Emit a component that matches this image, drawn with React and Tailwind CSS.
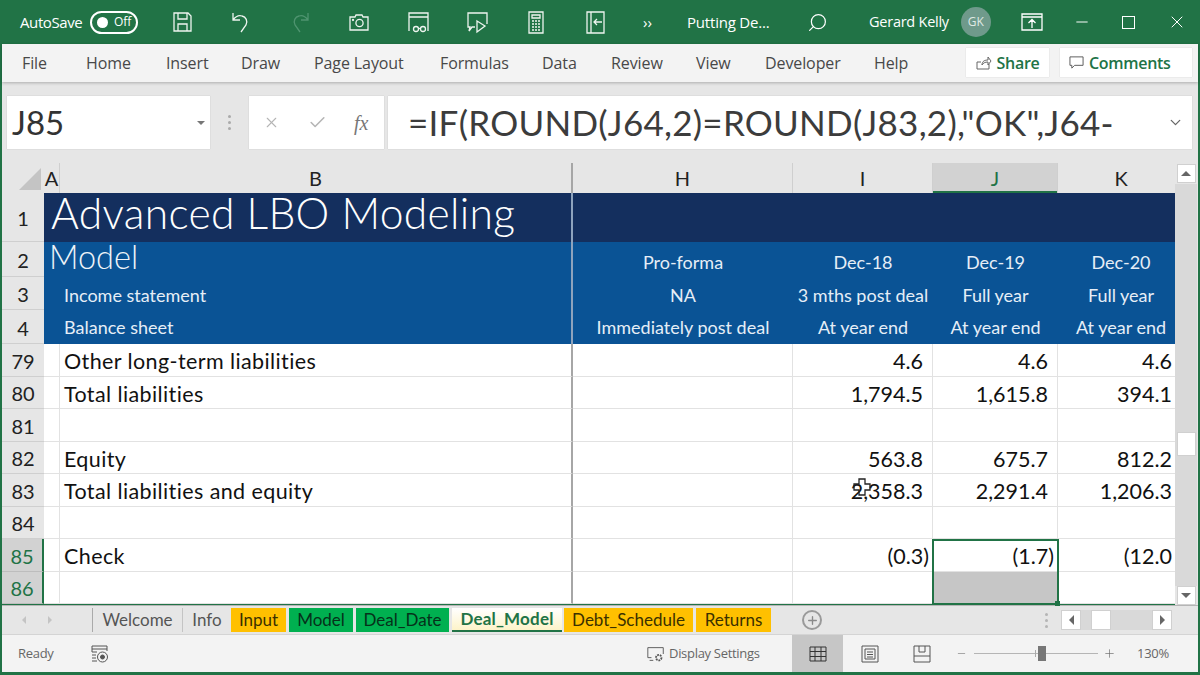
import React from "react"
import { ChevronDown, Plus, Search, Minus, X, Check } from "lucide-react"

const colGrid = "grid grid-cols-[42px_16px_513px_220px_140px_125px_117px]"
const ribbonTabs = [
  ["File", "w-[64px]"],
  ["Home", "w-[80px]"],
  ["Insert", "w-[75px]"],
  ["Draw", "w-[73px]"],
  ["Page Layout", "w-[126px]"],
  ["Formulas", "w-[102px]"],
  ["Data", "w-[69px]"],
  ["Review", "w-[85px]"],
  ["View", "w-[69px]"],
  ["Developer", "w-[109px]"],
  ["Help", "w-[60px]"],
]
const rows = [
  { n: "79", b: "Other long-term liabilities", i: "4.6", j: "4.6", k: "4.6" },
  { n: "80", b: "Total liabilities", i: "1,794.5", j: "1,615.8", k: "394.1" },
  { n: "81" },
  { n: "82", b: "Equity", i: "563.8", j: "675.7", k: "812.2" },
  { n: "83", b: "Total liabilities and equity", i: "2,358.3", j: "2,291.4", k: "1,206.3" },
  { n: "84" },
  { n: "85", b: "Check", i: "(0.3)", j: "(1.7)", k: "(12.0", active: true, neg: true },
  { n: "86", active: true, fill: true },
]
const sheetTabs = [
  ["Input", "w-[55px] bg-[#ffc000] text-[#3a3000]"],
  ["Model", "w-[64px] bg-[#00b050] text-[#06301a]"],
  ["Deal_Date", "w-[93px] bg-[#00b050] text-[#06301a]"],
]

const Tb = ({ children, className = "" }) => (
  <svg viewBox="0 0 24 24" className={"w-[24px] h-[24px] " + className} fill="none" stroke="currentColor" strokeWidth="1.3">
    {children}
  </svg>
)

const TitleBar = () => (
  <div className="h-[44px] bg-[#217346] text-white flex items-center text-[15px] shrink-0">
    <span className="ml-[20px] w-[70px] tracking-[-0.4px]">AutoSave</span>
    <div className="w-[48px] h-[23px] rounded-full border-2 border-white flex items-center pl-[5px] gap-[6px]">
      <span className="w-[11px] h-[11px] rounded-full bg-white" />
      <span className="text-[12px] leading-none">Off</span>
    </div>
    <div className="ml-[14px] flex items-center text-[#eef5f0]">
      <div className="w-[59px] flex justify-center">
        <Tb>
          <path d="M4 3h14l3 3v15H4zM8 3v6h9V3M8 21v-7h9v7" />
        </Tb>
      </div>
      <div className="w-[59px] flex justify-center">
        <Tb>
          <path d="M4 3v7h7M4 10c3-4 6-5 9-4 4 1 6 5 4 9l-5 7" />
        </Tb>
      </div>
      <div className="w-[59px] flex justify-center text-[#4f9470]">
        <Tb>
          <path d="M20 3v7h-7M20 10c-3-4-6-5-9-4-4 1-6 5-4 9l5 7" />
        </Tb>
      </div>
      <div className="w-[59px] flex justify-center">
        <Tb>
          <path d="M3 7h5l1-2h6l1 2h5v13H3z" />
          <circle cx="12.5" cy="13" r="3.6" />
          <circle cx="6" cy="10" r="0.5" />
        </Tb>
      </div>
      <div className="w-[59px] flex justify-center">
        <Tb>
          <path d="M3 21V3h19v18M3 7h19" />
          <circle cx="10" cy="19" r="2.5" />
          <circle cx="17" cy="19" r="2.5" />
          <path d="M12.5 18.5h2" />
        </Tb>
      </div>
      <div className="w-[59px] flex justify-center">
        <Tb>
          <path d="M10 17H7l-3 4 1-4H3V3h19v11M12 11l8 5-8 6z" />
        </Tb>
      </div>
      <div className="w-[59px] flex justify-center">
        <Tb>
          <path d="M5 2h14v21H5zM8 5h8v3H8zM8 11h2M11 11h2M14 11h2M8 14h2M11 14h2M14 14h2M8 17h2M11 17h2M14 17h2M8 20h2M11 20h2M14 20h2" />
        </Tb>
      </div>
      <div className="w-[59px] flex justify-center">
        <Tb>
          <path d="M4 2h17v21H4zM8 2v21M19 12h-8M14 9l-3 3 3 3" />
        </Tb>
      </div>
    </div>
    <span className="ml-[19px] text-[15px] leading-none">››</span>
    <span className="ml-[35px] w-[120px] text-[15px] tracking-[-0.2px]">Putting De...</span>
    <Search size={21} strokeWidth={1.4} className="-scale-x-100" />
    <span className="ml-[41px] text-[14.5px] tracking-[-0.25px]">Gerard Kelly</span>
    <div className="ml-[12px] w-[30px] h-[30px] rounded-full bg-[#6f9a8b] flex items-center justify-center text-[12px] text-[#dfe9e4]">GK</div>
    <div className="ml-[29px]">
      <Tb className="w-[20px] h-[20px]">
        <path d="M2 4h20v16H2zM2 7h20M12 18v-8M8.5 13l3.5-3.5 3.5 3.5" />
      </Tb>
    </div>
    <Minus size={18} strokeWidth={1.3} className="ml-[29px]" />
    <span className="ml-[31px] w-[13px] h-[13px] border border-white" />
    <X size={20} strokeWidth={1.2} className="ml-[32px]" />
  </div>
)

const RibbonTabs = () => (
  <div className="h-[38px] bg-[#f3f3f3] flex items-center text-[16px] text-[#484848] shadow-[0_1px_3px_rgba(0,0,0,0.25)] relative shrink-0">
    <div className="flex pl-[20px] -mt-[1px] tracking-[-0.1px]">
      {ribbonTabs.map(([t, w]) => (
        <span key={t} className={w}>{t}</span>
      ))}
    </div>
    <div className="ml-[32px] w-[83px] h-[29px] -mt-[1px] bg-white flex items-center justify-center gap-[5px] text-[#217346] font-semibold tracking-[-0.3px] shadow-[0_0_1px_rgba(0,0,0,0.2)]">
      <svg viewBox="0 0 16 16" className="w-[16px] h-[16px] text-[#666]" fill="none" stroke="currentColor" strokeWidth="1">
        <path d="M13 9v5H1V7h4M6 10c0-4 3-5 6-5V2l3 4-3 4V7c-3 0-5 1-6 3z" />
      </svg>
      Share
    </div>
    <div className="ml-[11px] w-[132px] h-[29px] -mt-[1px] bg-white flex items-center pl-[9px] gap-[5px] text-[#217346] font-semibold tracking-[-0.3px] shadow-[0_0_1px_rgba(0,0,0,0.2)]">
      <svg viewBox="0 0 16 16" className="w-[15px] h-[15px] text-[#555]" fill="none" stroke="currentColor" strokeWidth="1">
        <path d="M1 2h14v9H6l-3 3v-3H1z" />
      </svg>
      Comments
    </div>
  </div>
)

const FormulaBar = () => (
  <div className="h-[81px] bg-[#e6e6e6] flex items-center pl-[5px] font-['Lato',sans-serif] shrink-0">
    <div className="w-[203px] h-[53px] bg-white flex items-center justify-between pl-[5px] pr-[3px] text-[33px] text-[#333] shadow-[0_0_1px_rgba(0,0,0,0.2)]">
      J85
      <span className="w-0 h-0 border-x-[4px] border-x-transparent border-t-[4px] border-t-[#777] mr-[2px]" />
    </div>
    <div className="w-[39px] flex flex-col items-center gap-[3px]">
      <span className="w-[3px] h-[3px] bg-[#aaa] rounded-full" />
      <span className="w-[3px] h-[3px] bg-[#aaa] rounded-full" />
      <span className="w-[3px] h-[3px] bg-[#aaa] rounded-full" />
    </div>
    <div className="w-[135px] h-[53px] bg-white flex items-center text-[#b5b5b5] shadow-[0_0_1px_rgba(0,0,0,0.2)]">
      <X size={17} strokeWidth={1.6} className="ml-[14px]" />
      <Check size={19} strokeWidth={2} className="ml-[28px]" />
      <span className="ml-[27px] font-['Liberation_Serif',serif] italic text-[20px] text-[#777]">fx</span>
    </div>
    <div className="ml-[4px] w-[804px] h-[53px] bg-white flex items-center justify-between pl-[20px] pr-[8px] text-[35px] tracking-[0.25px] text-[#3c3c3c] shadow-[0_0_1px_rgba(0,0,0,0.2)]">
      <span>=IF(ROUND(J64,2)=ROUND(J83,2),"OK",J64-</span>
      <ChevronDown size={17} strokeWidth={1.8} className="text-[#666]" />
    </div>
  </div>
)

const ColHead = ({ label, className = "" }) => (
  <div className={"flex items-center justify-center text-[20px] text-[#222] border-r border-[#cfcfcf] " + className}>{label}</div>
)

const ColumnHeaders = () => (
  <div className={colGrid + " h-[30px] bg-[#e6e6e6]"}>
    <div className="flex items-end justify-end pr-[3px] pb-[3px]">
      <span className="w-0 h-0 border-l-[22px] border-l-transparent border-b-[22px] border-b-[#c4c4c4]" />
    </div>
    <ColHead label="A" />
    <ColHead label="B" className="border-r-2 border-r-[#a6a6a6]" />
    <ColHead label="H" />
    <ColHead label="I" />
    <ColHead label="J" className="bg-[#d2d2d2] text-[#217346] shadow-[inset_0_-2px_0_#217346]" />
    <ColHead label="K" className="border-r-0 pl-[9px]" />
  </div>
)

const RowNum = ({ n, active }) => (
  <div className={"flex items-center justify-center pt-[2px] text-[20px] leading-none border-b " + (active ? "bg-[#d2d2d2] text-[#217346] border-[#bdbdbd] border-r-2 border-r-[#217346]" : "bg-[#e6e6e6] text-[#222] border-[#cfcfcf]")}>
    {n}
  </div>
)

const HeaderRow = ({ n, h, bg, b, cols, nudge }) => (
  <div className={colGrid + " " + h}>
    <RowNum n={n} />
    <div className={bg} />
    <div className={"border-r-2 border-r-[#8ea3bd] flex items-center " + bg}>{b}</div>
    {cols.map((c, idx) => (
      <div key={idx} className={"flex items-center justify-center text-[#e6eef7] text-[18px] whitespace-nowrap " + bg + " " + nudge + (idx === 3 ? " pl-[9px]" : "")}>{c}</div>
    ))}
  </div>
)

const DataRow = ({ n, b, i, j, k, active, neg, fill }) => (
  <div className={colGrid + " h-[32.5px] bg-white text-[21.5px] leading-none text-[#111]"}>
    <RowNum n={n} active={active} />
    <div className="border-r border-b border-[#e2e2e2]" />
    <div className="border-r-2 border-r-[#a6a6a6] border-b border-b-[#e2e2e2] flex items-center pl-[4px] pt-[4px] tracking-[0.4px]">{b}</div>
    <div className="border-r border-b border-[#e2e2e2]" />
    <div className={"border-r border-b border-[#e2e2e2] flex items-center justify-end pt-[4px] " + (neg ? "pr-[3px]" : "pr-[9px]")}>{i}</div>
    <div className={"border-r border-b border-[#e2e2e2] flex items-center justify-end pt-[4px] " + (neg ? "pr-[3px]" : "pr-[9px]") + (fill ? " bg-[#c6c6c6]" : "")}>{j}</div>
    <div className="border-b border-[#e2e2e2] flex items-center justify-end pt-[4px] pr-[3px]">{k}</div>
  </div>
)

const ScrollBtn = ({ dir }) => (
  <div className="w-[19px] h-[19px] bg-white border border-[#d0d0d0] flex items-center justify-center">
    <span className={"w-0 h-0 border-x-[5px] border-x-transparent " + (dir === "up" ? "border-b-[5px] border-b-[#666]" : "border-t-[5px] border-t-[#666]")} />
  </div>
)

const VScroll = () => (
  <div className="w-[24px] bg-[#e6e6e6] flex flex-col items-center pt-[1px] pr-[1px]">
    <ScrollBtn dir="up" />
    <div className="flex-1 w-[22px] bg-[#d9d9d9] mt-[1px] flex flex-col pt-[248px] items-center">
      <div className="w-[19px] h-[24px] bg-white border border-[#d0d0d0]" />
    </div>
    <ScrollBtn dir="down" />
  </div>
)

const Sheet = () => (
  <div className="flex h-[442px] font-['Lato',sans-serif] relative shrink-0">
    <div className="w-[1173px] shrink-0">
      <ColumnHeaders />
      <HeaderRow
        n="1"
        h="h-[49px]"
        bg="bg-[#142f5e]"
        b={<span className="-ml-[9px] -mt-[10px] text-[42.6px] leading-[34px] font-light text-white tracking-[0.3px] whitespace-nowrap">Advanced LBO Modeling</span>}
        cols={["", "", "", ""]}
      />
      <HeaderRow
        n="2"
        h="h-[35px]"
        bg="bg-[#0a5395]"
        nudge="pt-[5px]"
        b={<span className="-ml-[11px] -mt-[4px] text-[32.5px] leading-none font-light text-[#eef3f9]">Model</span>}
        cols={["Pro-forma", "Dec-18", "Dec-19", "Dec-20"]}
      />
      <HeaderRow
        n="3"
        h="h-[33px]"
        bg="bg-[#0a5395]"
        nudge="pt-[3px]"
        b={<span className="pl-[4px] pt-[3px] text-[18px] text-[#e6eef7]">Income statement</span>}
        cols={["NA", "3 mths post deal", "Full year", "Full year"]}
      />
      <HeaderRow
        n="4"
        h="h-[34px]"
        bg="bg-[#0a5395]"
        nudge="pt-[1px]"
        b={<span className="pl-[4px] pt-[1px] text-[18px] text-[#e6eef7]">Balance sheet</span>}
        cols={["Immediately post deal", "At year end", "At year end", "At year end"]}
      />
      {rows.map((r) => (
        <DataRow key={r.n} {...r} />
      ))}
    </div>
    <VScroll />
    {/* selection box over J85:J86 */}
    <div className="absolute z-10 left-[930px] top-[376px] w-[127px] h-[66px] border-2 border-[#217346]">
      <span className="absolute -right-[3px] -bottom-[3px] w-[5px] h-[5px] bg-[#217346]" />
    </div>
    {/* excel plus cursor */}
    <svg viewBox="0 0 20 20" className="absolute z-10 left-[850px] top-[314px] w-[20px] h-[20px]" fill="none" stroke="#222" strokeWidth="1.3">
      <path d="M7 2h6v5h5v6h-5v5H7v-5H2V7h5z" />
    </svg>
  </div>
)

const TabBar = () => (
  <div className="h-[29px] bg-[#e6e6e6] border-t border-[#b5b5b5] flex items-center font-['Lato',sans-serif] text-[17px] shrink-0">
    <span className="ml-[20px] w-0 h-0 border-y-[4px] border-y-transparent border-r-[4px] border-r-[#c4c4c4]" />
    <span className="ml-[22px] w-0 h-0 border-y-[4px] border-y-transparent border-l-[4px] border-l-[#c4c4c4]" />
    <div className="ml-[40px] h-[24px] flex text-[#555]">
      <div className="w-[90px] border-l border-[#aaa] flex items-center justify-center">Welcome</div>
      <div className="w-[49px] border-l border-[#c4c4c4] flex items-center justify-center">Info</div>
      {sheetTabs.map(([t, c]) => (
        <div key={t} className={"mr-[3px] flex items-center justify-center " + c}>{t}</div>
      ))}
      <div className="w-[110px] bg-gradient-to-b from-white to-[#fdf3c8] border-b-2 border-[#217346] flex items-center justify-center font-bold tracking-[0.2px] text-[#217346] mr-[2px]">Deal_Model</div>
      <div className="w-[129px] mr-[3px] bg-[#ffc000] text-[#3a3000] flex items-center justify-center">Debt_Schedule</div>
      <div className="w-[75px] bg-[#ffc000] text-[#3a3000] flex items-center justify-center">Returns</div>
    </div>
    <div className="ml-[31px] w-[20px] h-[20px] rounded-full border-2 border-[#9a9a9a] flex items-center justify-center">
      <Plus size={13} strokeWidth={2.5} className="text-[#8a8a8a]" />
    </div>
    <div className="ml-[223px] flex flex-col gap-[3px]">
      <span className="w-[3px] h-[3px] bg-[#b5b5b5] rounded-full" />
      <span className="w-[3px] h-[3px] bg-[#b5b5b5] rounded-full" />
      <span className="w-[3px] h-[3px] bg-[#b5b5b5] rounded-full" />
    </div>
    <div className="ml-[13px] flex items-center">
      <div className="w-[20px] h-[20px] bg-white border border-[#d0d0d0] flex items-center justify-center">
        <span className="w-0 h-0 border-y-[5px] border-y-transparent border-r-[5px] border-r-[#666]" />
      </div>
      <div className="w-[71px] h-[20px] bg-[#d9d9d9] pl-[10px]">
        <div className="w-[20px] h-[20px] bg-white border border-[#d0d0d0]" />
      </div>
      <div className="w-[20px] h-[20px] bg-white border border-[#d0d0d0] flex items-center justify-center">
        <span className="w-0 h-0 border-y-[5px] border-y-transparent border-l-[5px] border-l-[#666]" />
      </div>
    </div>
  </div>
)

const StatusBar = () => (
  <div className="h-[38px] bg-[#f3f3f3] border-t border-[#d4d4d4] flex items-center text-[13px] text-[#666] shrink-0">
    <span className="ml-[16px] w-[72px] pt-[1px] tracking-[-0.3px]">Ready</span>
    <svg viewBox="0 0 20 20" className="w-[20px] h-[20px] text-[#555]" fill="none" stroke="currentColor" strokeWidth="1">
      <path d="M2 8V2h15v5M2 5h15M2 8h5M2 11h4M2 14h4M2 17h5" />
      <circle cx="12.5" cy="13" r="5" />
      <circle cx="12.5" cy="13" r="2" fill="currentColor" />
    </svg>
    <svg viewBox="0 0 22 20" className="ml-[536px] w-[20px] h-[20px] text-[#555]" fill="none" stroke="currentColor" strokeWidth="1">
      <path d="M6 14H2V3h17v7M4 17h4" />
      <circle cx="14" cy="14" r="3" strokeDasharray="2 1" strokeWidth="2" />
    </svg>
    <span className="ml-[3px] w-[113px] pt-[1px] tracking-[-0.3px]">Display Settings</span>
    <div className="ml-[10px] w-[51px] h-[37px] bg-[#c6c6c6] flex items-center justify-center">
      <svg viewBox="0 0 18 18" className="w-[18px] h-[18px] text-[#333]" fill="none" stroke="currentColor" strokeWidth="1">
        <path d="M1 2h16v14H1zM6 2v14M12 2v14M1 6.5h16M1 11.5h16" />
      </svg>
    </div>
    <svg viewBox="0 0 18 18" className="ml-[18px] w-[18px] h-[18px] text-[#555]" fill="none" stroke="currentColor" strokeWidth="1">
      <path d="M1 1h16v16H1zM4 4h10v10H4zM6 7h6M6 9.5h6M6 12h6" />
    </svg>
    <svg viewBox="0 0 18 18" className="ml-[34px] w-[18px] h-[18px] text-[#555]" fill="none" stroke="currentColor" strokeWidth="1">
      <path d="M1 1h16v16H1zM1 11h16M6 1v6h6V1" />
    </svg>
    <Minus size={11} strokeWidth={1.2} className="ml-[25px]" />
    <div className="ml-[7px] w-[124px] h-[1px] bg-[#b5b5b5] relative">
      <span className="absolute left-[64px] -top-[7px] w-[8px] h-[15px] bg-[#777]" />
      <span className="absolute left-[61px] -top-[3px] w-[1px] h-[7px] bg-[#aaa]" />
    </div>
    <Plus size={13} strokeWidth={1.2} className="ml-[5px]" />
    <span className="ml-[21px] pt-[1px] tracking-[-0.3px]">130%</span>
  </div>
)

const App = () => {
  return (
    <div className="w-[1200px] h-[675px] bg-[#217346] overflow-hidden flex flex-col pl-[2px] pr-[2px] pb-[3px] font-['Open_Sans',sans-serif]">
      <div className="-ml-[2px] -mr-[2px]">
        <TitleBar />
      </div>
      <RibbonTabs />
      <FormulaBar />
      <Sheet />
      <TabBar />
      <StatusBar />
    </div>
  )
}

export default App
